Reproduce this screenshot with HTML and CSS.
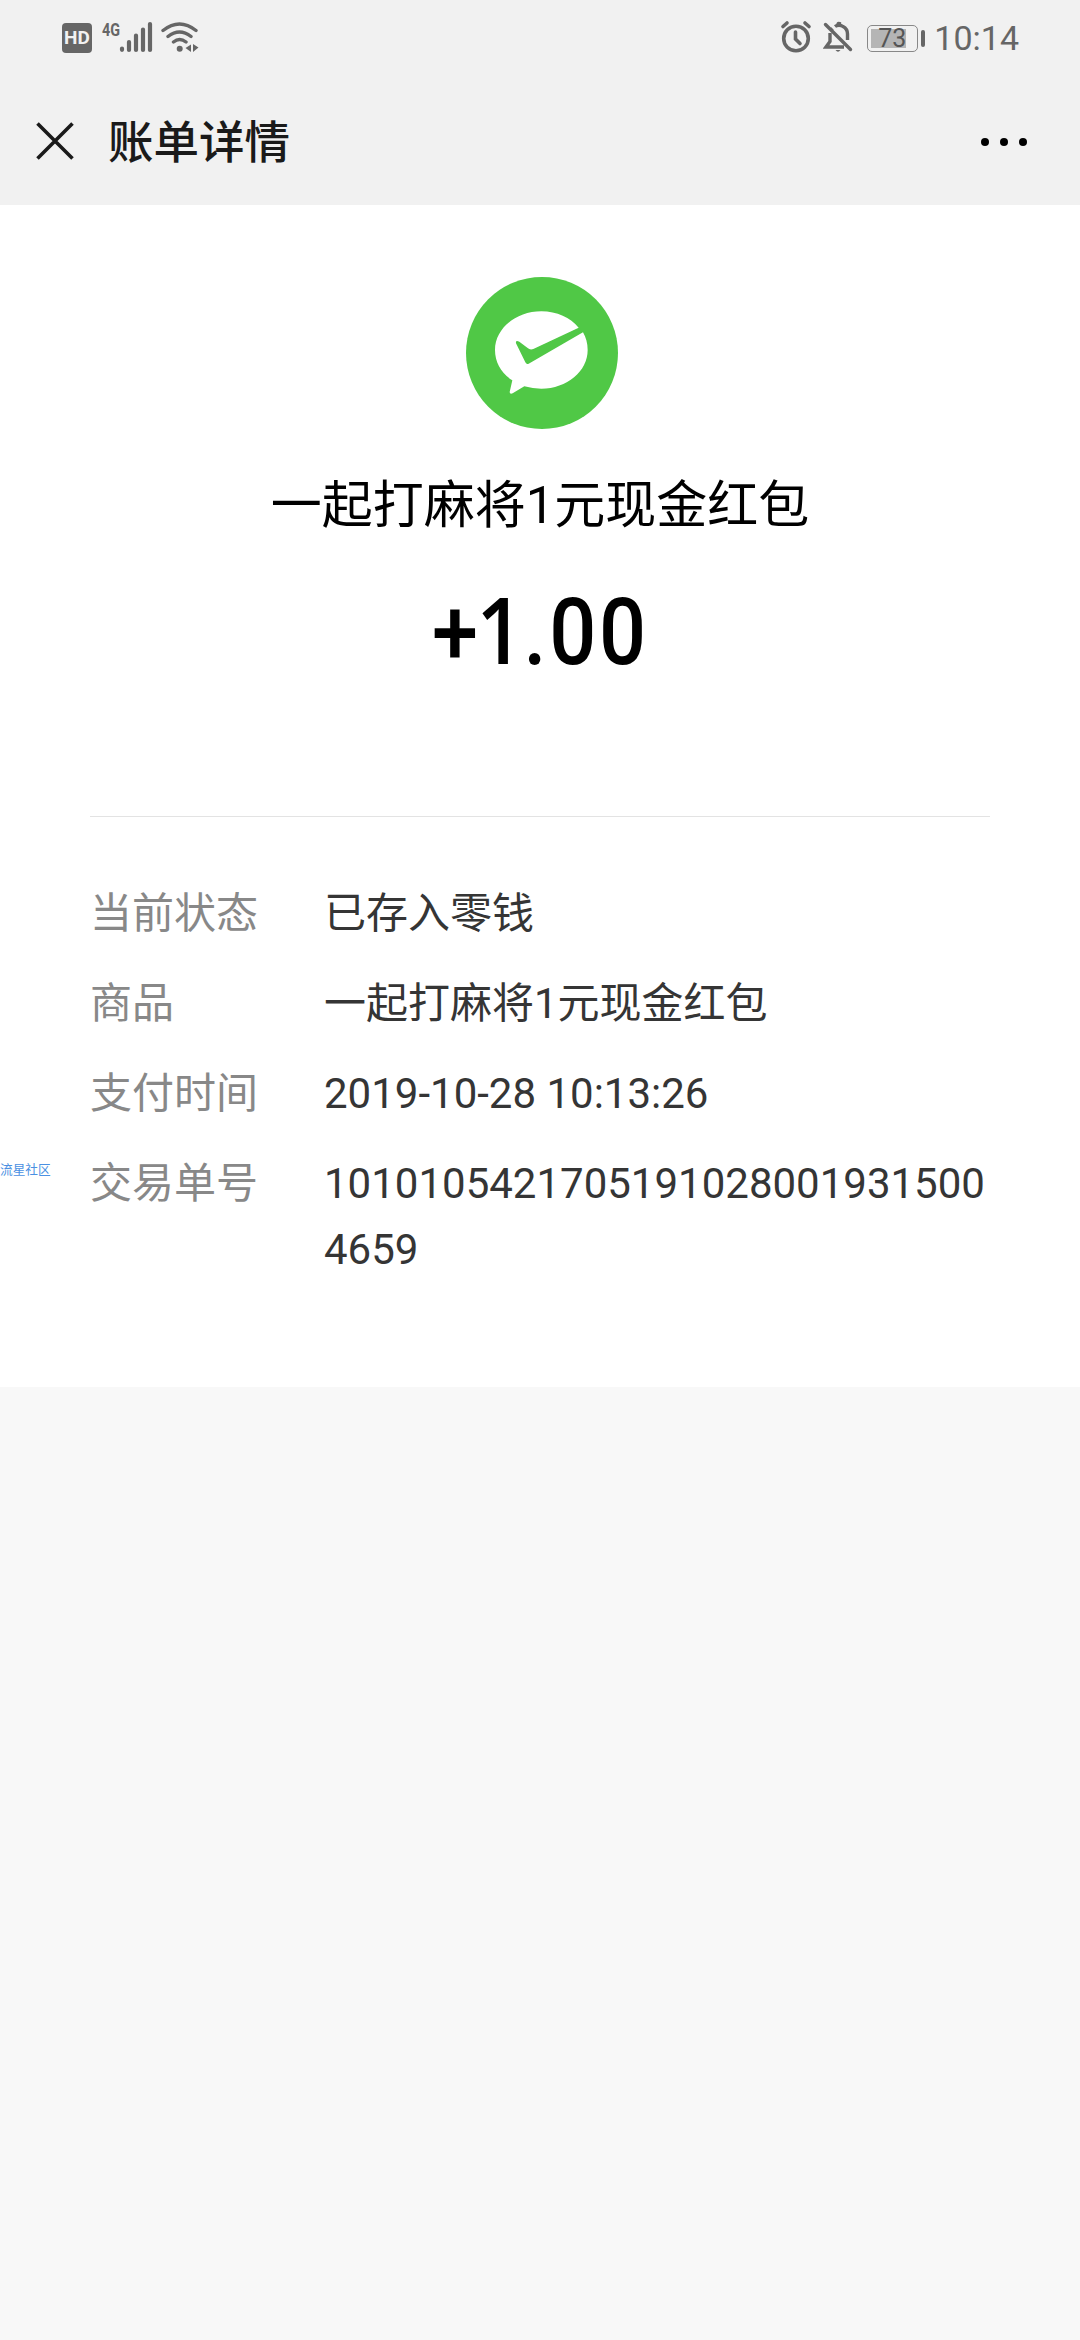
FILE: index.html
```
<!DOCTYPE html>
<html lang="zh-CN">
<head>
    <meta charset="UTF-8">
    <meta name="viewport" content="width=device-width, initial-scale=1.0">
    <title>账单详情</title>
    <link rel="stylesheet" href="styles.css">
</head>
<body>
    <div class="status-bar">
        <div class="status-left">
            <span class="hd-badge">HD</span>
            <svg class="signal-icon" width="57" height="54" viewBox="96 10 57 54">
                <text class="signal-text" x="102" y="35.5" textLength="18" lengthAdjust="spacingAndGlyphs">4G</text>
                <g stroke="#666" stroke-width="4.2" stroke-linecap="round">
                    <path d="M122 48.6v1.2M129 42v8M136 35.5v14.5M143 29.5v20.5M150 24v26"/>
                </g>
            </svg>
            <svg class="wifi-icon" width="40" height="34" viewBox="160 20 40 34" fill="none" stroke="#666" stroke-width="3.4" stroke-linecap="round">
                <path d="M163 30.5Q179.5 17.5 196 30.5M168 36.5Q179.5 27.5 191 36.5M173.5 42Q179.5 37 186 42"/>
                <circle cx="179.7" cy="48.7" r="3" fill="#666" stroke="none"/>
                <path d="M191 44.5v7.5l-5.5-4zM193 44v8l5.5-4.5z" fill="#666" stroke="none"/>
            </svg>
        </div>
        <div class="status-right">
            <svg width="32" height="34" viewBox="779 20 32 34" fill="none" stroke="#666" stroke-width="3.6" stroke-linecap="round">
                <circle cx="795" cy="38.5" r="12.3"/>
                <path d="M794.5 32v7l4.5 4.5M782 26.5l4-3.5M808 26.5l-4-3.5"/>
            </svg>
            <svg class="bell-icon" width="30" height="34" viewBox="822 20 30 34" fill="none" stroke="#666" stroke-width="3.4">
                <path d="M824.5 24.5l25 25" stroke-linecap="round"/>
                <path d="M829 33v8.5l-4 5.5h18M831.5 28.5l-1 1M834 26.5c2-1.5 6-1.5 8 0 3 1.5 4.5 4.5 4.5 7.5v6M837 26v-1.5q0-1.5 1.5-1v2"/>
                <path d="M834.5 50h5q-2.5 3.5-5 0z" fill="#666" stroke="none"/>
            </svg>
            <div class="battery">
                <div class="battery-body">
                    <span class="battery-level">73</span>
                </div>
                <i class="battery-cap"></i>
            </div>
            <span class="clock">10:14</span>
        </div>
    </div>

    <header class="nav-bar">
        <svg class="close-icon" width="38" height="38" viewBox="0 0 38 38" stroke="#1a1a1a" stroke-width="3.6">
            <path d="M1.5 1.5l35 35M36.5 1.5l-35 35"/>
        </svg>
        <h1 class="nav-title">账单详情</h1>
        <div class="more">
            <i class="dot"></i>
            <i class="dot"></i>
            <i class="dot"></i>
        </div>
    </header>

    <main class="bill">
        <div class="summary">
            <svg class="logo" width="152" height="152" viewBox="48 53 456 456">
                <circle cx="276" cy="281" r="228" fill="#50c846"/>
                <path d="M274 156C198 156 135 208 135 272C135 310 155 343 187 363L179 398Q179 405 188 402L223 381Q248 388 274 388C351 388 413 336 413 272C413 252 408 235 399 219L236 313Q230 317 226 309L198 252Q196 241 208 247L233 266Q240 273 250 269L386 205C361 175 321 156 274 156Z" fill="#fff"/>
            </svg>
            <div class="merchant">一起打麻将1元现金红包</div>
            <div class="amount">+<span class="one">1</span>.00</div>
        </div>

        <dl class="details">
            <div class="row">
                <dt class="label">当前状态</dt>
                <dd class="value">已存入零钱</dd>
            </div>
            <div class="row">
                <dt class="label">商品</dt>
                <dd class="value">一起打麻将1元现金红包</dd>
            </div>
            <div class="row">
                <dt class="label">支付时间</dt>
                <dd class="value">2019-10-28 10:13:26</dd>
            </div>
            <div class="row">
                <dt class="label">交易单号</dt>
                <dd class="value">10101054217051910280019315004659</dd>
            </div>
        </dl>
    </main>

    <div class="watermark">流星社区</div>
</body>
</html>
```

FILE: styles.css
```
* {
    margin: 0;
    padding: 0;
    box-sizing: border-box;
}

body {
    font-family: Roboto, "Noto Sans CJK SC", sans-serif;
    background: #f8f8f8;
    color: #000;
    min-height: 100vh;
}

svg {
    display: block;
    flex: none;
}

/* status bar */
.status-bar {
    height: 74px;
    padding: 0 61px 0 62px;
    background: #f1f1f1;
    color: #666;
    display: flex;
    justify-content: space-between;
    align-items: center;
}

.status-left,
.status-right {
    display: flex;
    align-items: center;
}

.hd-badge {
    width: 30px;
    height: 30px;
    margin-top: 2px;
    border-radius: 4px;
    background: #666;
    color: #f1f1f1;
    font-size: 19px;
    font-weight: 700;
    line-height: 30px;
    text-align: center;
}

.signal-icon {
    margin-left: 4px;
}

.signal-text {
    font-size: 19px;
    font-weight: 700;
    fill: #666;
}

.wifi-icon {
    margin-left: 7px;
}

.bell-icon {
    margin-left: 11px;
}

.battery {
    margin: 2px 0 0 14px;
    display: flex;
    align-items: center;
    gap: 3px;
}

.battery-body {
    width: 51px;
    height: 27px;
    padding: 3px;
    border: 1.5px solid #888;
    border-radius: 5px;
    display: flex;
}

.battery-level {
    width: 35px;
    background: #b5b5b5;
    color: #555;
    font-size: 25px;
    line-height: 20px;
    text-align: right;
}

.battery-cap {
    width: 4px;
    height: 17px;
    border-radius: 2px;
    background: #666;
}

.clock {
    margin: 2px 0 0 9px;
    font-size: 34px;
    line-height: 40px;
}

/* navigation */
.nav-bar {
    height: 131px;
    padding: 2px 53px 0 36px;
    background: #f1f1f1;
    display: flex;
    align-items: center;
}

.nav-title {
    margin: 6px 0 0 34px;
    font-size: 45.5px;
    font-weight: 500;
    line-height: 60px;
    color: #1a1a1a;
}

.more {
    margin: 2px 0 0 auto;
    display: flex;
    gap: 11px;
}

.dot {
    width: 8px;
    height: 8px;
    border-radius: 50%;
    background: #000;
}

/* bill */
.bill {
    height: 1182px;
    padding: 72px 90px 0;
    background: #fff;
}

.summary {
    height: 540px;
    border-bottom: 1px solid #e3e3e3;
    display: flex;
    flex-direction: column;
    align-items: center;
}

.logo {
    margin-left: 4px;
}

.merchant {
    margin-top: 42px;
    font-size: 51px;
    line-height: 70px;
}

.amount {
    margin-top: 33px;
    font-size: 92px;
    font-weight: 500;
    line-height: 110px;
    letter-spacing: 3px;
    transform: scaleX(0.9);
}

/* straight-flag numeral, set tight against the sign */
.one {
    margin: 0 -3px 0 -5px;
    font-family: "Open Sans", sans-serif;
    font-weight: 600;
}

.details {
    padding-top: 64px;
    display: flex;
    flex-direction: column;
    gap: 24px;
    font-size: 42px;
    line-height: 66px;
}

.row {
    display: flex;
}

.label {
    width: 234px;
    flex: none;
    color: #888;
}

.value {
    flex: 1;
    min-width: 0;
    color: #353535;
    word-break: break-all;
}

.watermark {
    position: absolute;
    left: 0;
    top: 1160px;
    font-size: 12.7px;
    line-height: 20px;
    color: #4a90e2;
}
```
